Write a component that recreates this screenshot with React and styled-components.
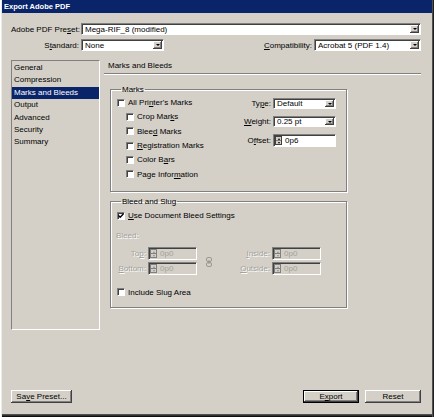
import React from "react";
import styled, { createGlobalStyle, css } from "styled-components";

const GlobalStyle = createGlobalStyle`
  html, body { margin: 0; padding: 0; background: #d4d0c8; }
  body {
    font-family: "Liberation Sans", Arial, sans-serif;
    font-size: 8px;
    color: #000;
  }
  #root { width: 434px; height: 417px; }
  * { box-sizing: border-box; }
  u { text-underline-offset: 1px; }
`;

const Window = styled.div`
  width: 434px;
  height: 417px;
  display: flex;
  flex-direction: column;
  background: #d4d0c8;
  padding: 0 2px 3px 2px;
  box-shadow: inset 1px 0 #ffffff, inset 2px 0 #ecebe6, inset -1px 0 #202020,
    inset -2px 0 #505050, inset 0 -1px #101010, inset 0 -2px #303030,
    inset 0 -3px #505050;
`;

const TitleBar = styled.div`
  height: 13px;
  flex: none;
  background: #0a246a;
  color: #fff;
  font-weight: bold;
  font-size: 7.5px;
  display: flex;
  align-items: center;
  padding-left: 2px;
`;

const Body = styled.div`
  flex: 1;
  display: flex;
  flex-direction: column;
  padding: 10px 11px 11px 9px;
`;

const FormRow = styled.div`
  display: flex;
  align-items: center;
  height: 12px;
  margin-top: ${(p) => p.$mt || 0}px;
`;

const RowLabel = styled.span`
  width: ${(p) => (p.$w ? `${p.$w}px` : "auto")};
  text-align: right;
  margin-right: 2px;
  white-space: nowrap;
  color: ${(p) => (p.$disabled ? "#a3a19a" : "#000")};
  text-shadow: ${(p) => (p.$disabled ? "1px 1px 0 #fff" : "none")};
`;

const Spacer = styled.div`
  flex: 1;
`;

const sunken = css`
  border: 1px solid;
  border-color: #808080 #ffffff #ffffff #808080;
  box-shadow: inset 1px 1px #404040;
`;

const raised = css`
  background: #d4d0c8;
  box-shadow: inset -1px -1px #404040, inset 1px 1px #ffffff,
    inset -2px -2px #808080;
`;

const Combo = styled.div`
  ${sunken};
  display: flex;
  align-items: center;
  background: #fff;
  height: ${(p) => p.$h || 12}px;
  width: ${(p) => (p.$w ? `${p.$w}px` : "auto")};
  flex: ${(p) => (p.$grow ? 1 : "none")};
  padding: 1px 1px 1px 3px;
`;

const ComboText = styled.span`
  flex: 1;
  white-space: nowrap;
  overflow: hidden;
  line-height: 9px;
`;

const DropBtn = styled.span`
  ${raised};
  width: 9px;
  height: 100%;
  display: flex;
  align-items: center;
  justify-content: center;
  flex: none;
`;

const Arrow = styled.span`
  width: 0;
  height: 0;
  border-left: 2px solid transparent;
  border-right: 2px solid transparent;
  border-top: 2px solid #000;
`;

const Main = styled.div`
  margin-top: 9px;
  display: flex;
  gap: 4px;
  height: 270px;
`;

const NavList = styled.div`
  width: 89px;
  height: 100%;
  border: 1px solid;
  border-color: #808080 #ffffff #ffffff #808080;
  padding-top: 1px;
  display: flex;
  flex-direction: column;
`;

const NavItem = styled.div`
  height: 12.4px;
  line-height: 12.4px;
  padding-left: 2px;
  white-space: nowrap;
  background: ${(p) => (p.$active ? "#0a246a" : "transparent")};
  color: ${(p) => (p.$active ? "#fff" : "#000")};
`;

const Panel = styled.div`
  flex: 1;
  display: flex;
  flex-direction: column;
`;

const PanelTitle = styled.div`
  padding: 1px 0 0 4px;
  line-height: 10px;
`;

const Rule = styled.div`
  margin-top: 2px;
  border-top: 1px solid #808080;
  border-bottom: 1px solid #ffffff;
`;

const Group = styled.fieldset`
  margin: ${(p) => p.$mt}px 0 0 6px;
  width: 237px;
  min-width: 0;
  border: 1px solid #808080;
  box-shadow: inset 1px 1px #ffffff, 1px 1px #ffffff;
  padding: 2px 10px ${(p) => p.$pb}px 6px;
  display: flex;
  flex-direction: ${(p) => (p.$row ? "row" : "column")};
  align-items: flex-start;
`;

const Legend = styled.legend`
  padding: 0 1px;
  margin-left: 4px;
  line-height: 9px;
  font-size: 8px;
`;

const CheckColumn = styled.div`
  display: flex;
  flex-direction: column;
`;

const CheckRow = styled.label`
  display: flex;
  align-items: center;
  height: 14.33px;
  margin-left: ${(p) => p.$indent || 0}px;
  margin-top: ${(p) => p.$mt || 0}px;
  white-space: nowrap;
`;

const Box = styled.span`
  width: 8px;
  height: 8px;
  flex: none;
  background: #fff;
  border: 1px solid;
  border-color: #808080 #ffffff #ffffff #808080;
  box-shadow: inset 1px 1px #404040, 1px 1px #d4d0c8;
  margin-right: 3px;
  display: flex;
  align-items: center;
  justify-content: center;
`;

const FieldGrid = styled.div`
  margin-left: auto;
  margin-top: 2.5px;
  display: grid;
  grid-template-columns: auto 63px;
  column-gap: 2px;
  row-gap: 7px;
  align-items: center;
`;

const GridLabel = styled.span`
  text-align: right;
  white-space: nowrap;
`;

const SpinField = styled.div`
  ${sunken};
  display: flex;
  align-items: stretch;
  height: ${(p) => p.$h}px;
  background: ${(p) => (p.$disabled ? "#d4d0c8" : "#fff")};
  padding: 1px;
`;

const SpinBox = styled.span`
  width: 7px;
  flex: none;
  display: flex;
  flex-direction: column;
  border: 1px solid ${(p) => (p.$disabled ? "#808080" : "#404040")};
  background: #d4d0c8;
`;

const SpinHalf = styled.span`
  flex: 1;
  display: flex;
  align-items: center;
  justify-content: center;
  & + & {
    border-top: 1px solid ${(p) => (p.$disabled ? "#808080" : "#404040")};
  }
`;

const Tri = styled.span`
  width: 0;
  height: 0;
  border-left: 1.5px solid transparent;
  border-right: 1.5px solid transparent;
  ${(p) =>
    p.$up
      ? `border-bottom: 2px solid ${p.$disabled ? "#909090" : "#000"};`
      : `border-top: 2px solid ${p.$disabled ? "#909090" : "#000"};`}
`;

const SpinText = styled.span`
  padding-left: 3px;
  line-height: 9px;
  align-self: center;
  color: ${(p) => (p.$disabled ? "#a3a19a" : "#000")};
`;

const DimText = styled.div`
  color: #a3a19a;
  text-shadow: 1px 1px 0 #fff;
  line-height: 9px;
  margin-top: ${(p) => p.$mt || 0}px;
  margin-left: -1px;
`;

const BleedGrid = styled.div`
  margin-top: 7.5px;
  display: grid;
  grid-template-columns: 31px 49px 24px 51px 49px;
  grid-template-rows: 13px 13px;
  row-gap: 2px;
  align-items: center;
`;

const BleedLabel = styled.span`
  text-align: right;
  padding-right: 2px;
  white-space: nowrap;
  color: #a3a19a;
  text-shadow: 1px 1px 0 #fff;
`;

const ChainCell = styled.div`
  grid-column: 3;
  grid-row: 1 / 3;
  display: flex;
  justify-content: center;
  padding-top: 2px;
`;

const Footer = styled.div`
  margin-top: auto;
  display: flex;
  align-items: center;
  gap: 6px;
`;

const Button = styled.button`
  ${raised};
  font: inherit;
  font-size: 8px;
  color: #000;
  border: ${(p) => (p.$default ? "1px solid #000" : "none")};
  width: ${(p) => p.$w}px;
  height: 13px;
  padding: 0;
  line-height: 11px;
  text-align: center;
  white-space: nowrap;
`;

const Check = () => (
  <svg width="6" height="6" viewBox="0 0 6 6">
    <path d="M0.5 2.5 L2.2 4.3 L5.5 0.8" stroke="#000" strokeWidth="1.3" fill="none" />
  </svg>
);

const Chain = () => (
  <svg width="6" height="10" viewBox="0 0 6 10">
    <rect x="0.5" y="0.5" width="5" height="4" rx="1.5" fill="none" stroke="#9a988f" />
    <rect x="0.5" y="5.5" width="5" height="4" rx="1.5" fill="none" stroke="#9a988f" />
    <line x1="3" y1="3" x2="3" y2="7" stroke="#9a988f" />
  </svg>
);

const CheckBox = ({ children, indent, checked, mt }) => (
  <CheckRow $indent={indent} $mt={mt}>
    <Box>{checked && <Check />}</Box>
    <span>{children}</span>
  </CheckRow>
);

const Spinner = ({ value, h, disabled }) => (
  <SpinField $h={h} $disabled={disabled}>
    <SpinBox $disabled={disabled}>
      <SpinHalf $disabled={disabled}>
        <Tri $up $disabled={disabled} />
      </SpinHalf>
      <SpinHalf $disabled={disabled}>
        <Tri $disabled={disabled} />
      </SpinHalf>
    </SpinBox>
    <SpinText $disabled={disabled}>{value}</SpinText>
  </SpinField>
);

const Select = ({ value, w, h, grow }) => (
  <Combo $w={w} $h={h} $grow={grow}>
    <ComboText>{value}</ComboText>
    <DropBtn>
      <Arrow />
    </DropBtn>
  </Combo>
);

const navItems = [
  "General",
  "Compression",
  "Marks and Bleeds",
  "Output",
  "Advanced",
  "Security",
  "Summary",
];

export default function App() {
  return (
    <>
      <GlobalStyle />
      <Window>
        <TitleBar>Export Adobe PDF</TitleBar>
        <Body>
          <FormRow>
            <RowLabel $w={68}>
              Adobe PDF Pre<u>s</u>et:
            </RowLabel>
            <Select value="Mega-RIF_8 (modified)" grow />
          </FormRow>
          <FormRow $mt={4}>
            <RowLabel $w={68}>
              S<u>t</u>andard:
            </RowLabel>
            <Select value="None" w={83} />
            <Spacer />
            <RowLabel>
              <u>C</u>ompatibility:
            </RowLabel>
            <Select value="Acrobat 5 (PDF 1.4)" w={107} />
          </FormRow>
          <Main>
            <NavList>
              {navItems.map((n) => (
                <NavItem key={n} $active={n === "Marks and Bleeds"}>
                  {n}
                </NavItem>
              ))}
            </NavList>
            <Panel>
              <PanelTitle>Marks and Bleeds</PanelTitle>
              <Rule />
              <Group $mt={9.5} $pb={10} $row>
                <Legend>Marks</Legend>
                <CheckColumn>
                  <CheckBox>
                    All Pri<u>n</u>ter's Marks
                  </CheckBox>
                  <CheckBox indent={9}>
                    Crop Mar<u>k</u>s
                  </CheckBox>
                  <CheckBox indent={9}>
                    Blee<u>d</u> Marks
                  </CheckBox>
                  <CheckBox indent={9}>
                    <u>R</u>egistration Marks
                  </CheckBox>
                  <CheckBox indent={9}>
                    Color B<u>a</u>rs
                  </CheckBox>
                  <CheckBox indent={9}>
                    Page Infor<u>m</u>ation
                  </CheckBox>
                </CheckColumn>
                <FieldGrid>
                  <GridLabel>
                    Ty<u>p</u>e:
                  </GridLabel>
                  <Select value="Default" h={11} />
                  <GridLabel>
                    <u>W</u>eight:
                  </GridLabel>
                  <Select value="0.25 pt" h={11} />
                  <GridLabel>
                    O<u>f</u>fset:
                  </GridLabel>
                  <Spinner value="0p6" h={13} />
                </FieldGrid>
              </Group>
              <Group $mt={5} $pb={8}>
                <Legend>Bleed and Slug</Legend>
                <CheckBox checked>
                  <u>U</u>se Document Bleed Settings
                </CheckBox>
                <DimText $mt={8}>Bleed:</DimText>
                <BleedGrid>
                  <BleedLabel>
                    To<u>p</u>:
                  </BleedLabel>
                  <Spinner value="0p0" h={13} disabled />
                  <ChainCell>
                    <Chain />
                  </ChainCell>
                  <BleedLabel>
                    <u>I</u>nside:
                  </BleedLabel>
                  <Spinner value="0p0" h={13} disabled />
                  <BleedLabel>
                    <u>B</u>ottom:
                  </BleedLabel>
                  <Spinner value="0p0" h={13} disabled />
                  <BleedLabel>
                    <u>O</u>utside:
                  </BleedLabel>
                  <Spinner value="0p0" h={13} disabled />
                </BleedGrid>
                <CheckBox mt={9.7}>Include Slug Area</CheckBox>
              </Group>
            </Panel>
          </Main>
          <Footer>
            <Button $w={61}>
              Sa<u>v</u>e Preset...
            </Button>
            <Spacer />
            <Button $w={56} $default>
              E<u>x</u>port
            </Button>
            <Button $w={56}>Reset</Button>
          </Footer>
        </Body>
      </Window>
    </>
  );
}
